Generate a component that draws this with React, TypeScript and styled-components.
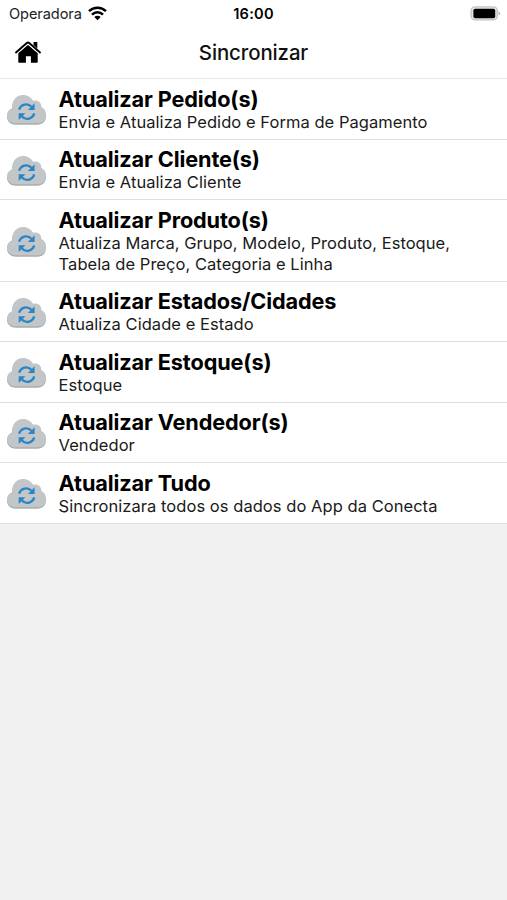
import React from "react";
import styled, { createGlobalStyle } from "styled-components";

const GlobalStyle = createGlobalStyle`
  * { box-sizing: border-box; }
  body {
    margin: 0;
    background: #f1f1f1;
    color: #000;
    font-family: Inter, "Liberation Sans", sans-serif;
  }
`;

const Screen = styled.main`
  min-height: 100vh;
  background: #f1f1f1;
`;

const StatusBar = styled.div`
  display: grid;
  grid-template-columns: 1fr auto 1fr;
  align-items: center;
  height: 27px;
  padding: 0 6px 0 9px;
  background: #fff;
`;

const Carrier = styled.div`
  display: flex;
  align-items: center;
  gap: 6px;
  font-size: 14.6px;
  color: #222;
  letter-spacing: -0.1px;
`;

const Clock = styled.time`
  font-size: 14.6px;
  font-weight: 600;
  letter-spacing: 0.25px;
  margin-right: 3px;
`;

const Power = styled.div`
  display: flex;
  justify-content: flex-end;
`;

const NavBar = styled.header`
  display: grid;
  grid-template-columns: 56px 1fr 56px;
  align-items: center;
  height: 52.3px;
  border-bottom: 1px solid #e6e6e6;
  background: #fff;
`;

const HomeButton = styled.button`
  display: flex;
  padding: 0 0 2px 14px;
  border: 0;
  background: none;
`;

const PageTitle = styled.h1`
  margin: 0;
  font-size: 20.4px;
  font-weight: 500;
  letter-spacing: -0.1px;
  text-align: center;
  color: #111;
`;

const List = styled.ul`
  margin: 0;
  padding: 0;
  list-style: none;
`;

const Row = styled.li`
  display: flex;
  align-items: center;
  gap: 11.6px;
  padding: 6.4px 40px 6.5px 7px;
  border-bottom: 1px solid #dfdfdf;
  background: #fff;
`;

const RowTitle = styled.h2`
  margin: 0;
  font-size: 21.7px;
  line-height: 26.2px;
  font-weight: 700;
  letter-spacing: -0.12px;
`;

const RowText = styled.p`
  margin: 0;
  font-size: 16.5px;
  line-height: 20.5px;
  letter-spacing: 0.05px;
  color: #1a1a1a;
`;

const Icon = styled.svg`
  display: block;
  flex: none;
`;

const CloudIcon = styled(Icon)`
  margin-top: 2.4px;
`;

const Wifi = () => (
  <Icon width="19" height="15" viewBox="0 0 19 15">
    <g fill="none" stroke="#000" strokeWidth="2.5">
      <path d="M1 5.2a12.2 12.2 0 0 1 17 0" />
      <path d="M4 8.6a7.8 7.8 0 0 1 11 0" />
    </g>
    <path d="M9.5 14.2 6.3 11a4.5 4.5 0 0 1 6.4 0Z" />
  </Icon>
);

const Battery = () => (
  <Icon width="31" height="15" viewBox="0 0 31 15">
    <rect x="1.1" y="0.9" width="26.2" height="13" rx="4" fill="#e4e4e4" stroke="#c4c4c4" strokeWidth="1.4" />
    <rect x="3.4" y="2.8" width="21.8" height="9.4" rx="1.8" />
    <path d="M28.6 5.2q3.2 2.2 0 4.4Z" fill="#b4b4b4" />
  </Icon>
);

const Home = () => (
  <Icon width="28" height="24" viewBox="0 0 28 24">
    <path d="M4.3 13 14 4.8 23.7 13v9q0 .8-.8.8h-6v-6.5h-5v6.5H5.1q-.8 0-.8-.8Z" />
    <path d="M19.5 2h3.8v6.4l-3.8-3.3Z" />
    <path d="M2 12.4 12.8 3q1.2-1 2.4 0L26 12.4" fill="none" stroke="#000" strokeWidth="2" strokeLinecap="round" />
    <path d="m3.2 13.6 10.8-9.3 10.8 9.3" fill="none" stroke="#fff" strokeWidth=".8" />
  </Icon>
);

const CLOUD =
  "M9 29C3.5 29 0 25.5 0 21c0-3.5 2-6.5 5.3-7.7C4.6 6 9.2 0 16 0c4.8 0 8.3 2.5 10 6 4.3-1.6 8.6 1.2 8.2 6.2C37.5 13.5 39 16.5 39 20c0 5.5-3.2 9-8.5 9Z";

const CloudSync = () => (
  <CloudIcon width="40" height="30" viewBox="0 0 40 30">
    <path d={CLOUD} fill="#a9adaf" transform="translate(0 .7)" />
    <path d={CLOUD} fill="#c3c6c8" transform="scale(1 .975)" />
    <g fill="none" stroke="#2985c4" strokeWidth="2.3">
      <path d="M12.2 14.8c1.3-5.2 8.2-7.5 12.2-3" />
      <path d="M27.2 18.4c-1.3 5.2-8.2 7.5-12.2 3" />
    </g>
    <path d="M27.6 8.2v6.7h-6.7ZM11.7 25v-6.7h6.7Z" fill="#2985c4" />
  </CloudIcon>
);

const actions = [
  { title: "Atualizar Pedido(s)", text: "Envia e Atualiza Pedido e Forma de Pagamento" },
  { title: "Atualizar Cliente(s)", text: "Envia e Atualiza Cliente" },
  {
    title: "Atualizar Produto(s)",
    text: "Atualiza Marca, Grupo, Modelo, Produto, Estoque, Tabela de Preço, Categoria e Linha",
  },
  { title: "Atualizar Estados/Cidades", text: "Atualiza Cidade e Estado" },
  { title: "Atualizar Estoque(s)", text: "Estoque" },
  { title: "Atualizar Vendedor(s)", text: "Vendedor" },
  { title: "Atualizar Tudo", text: "Sincronizara todos os dados do App da Conecta" },
];

export default function App() {
  return (
    <Screen>
      <GlobalStyle />
      <StatusBar>
        <Carrier>
          Operadora
          <Wifi />
        </Carrier>
        <Clock>16:00</Clock>
        <Power>
          <Battery />
        </Power>
      </StatusBar>
      <NavBar>
        <HomeButton aria-label="Início">
          <Home />
        </HomeButton>
        <PageTitle>Sincronizar</PageTitle>
      </NavBar>
      <List>
        {actions.map(({ title, text }) => (
          <Row key={title}>
            <CloudSync />
            <div>
              <RowTitle>{title}</RowTitle>
              <RowText>{text}</RowText>
            </div>
          </Row>
        ))}
      </List>
    </Screen>
  );
}
